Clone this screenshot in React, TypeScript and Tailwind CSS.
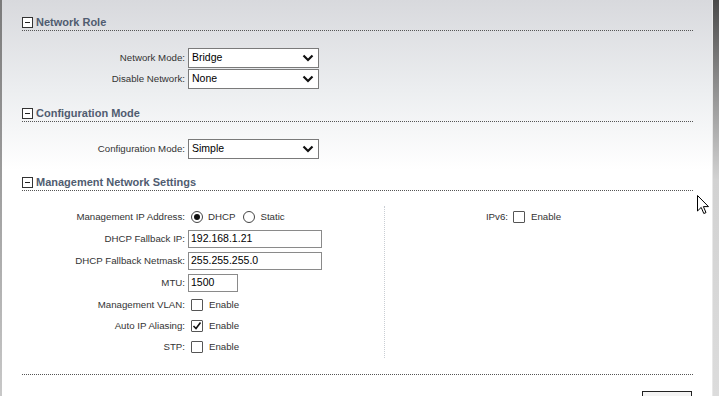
import React from "react";

const font = { fontFamily: '"Liberation Sans", Arial, sans-serif' };

function SectionHeader({ title, mt }: { title: string; mt: string }) {
  return (
    <div className={`${mt} flex items-center h-[15px] border-b border-dotted border-[#555] pb-[1px]`}>
      <div className="relative w-[11px] h-[11px] border border-[#333] bg-white flex items-center justify-center">
        <div className="w-[5px] h-[1px] bg-[#222]" />
      </div>
      <span className="ml-[3px] text-[11px] font-bold text-[#505c70] leading-none">{title}</span>
    </div>
  );
}

function Chevron() {
  return (
    <svg width="12" height="8" viewBox="0 0 12 8" className="block">
      <polyline points="1.5,1.5 6,6 10.5,1.5" fill="none" stroke="#111" strokeWidth="2.2" />
    </svg>
  );
}

function Select({ value }: { value: string }) {
  return (
    <div className="w-[131px] h-[20px] border border-[#7a7a7a] bg-white flex items-center justify-between pl-[3px] pr-[4px]">
      <span className="text-[10.5px] text-black">{value}</span>
      <Chevron />
    </div>
  );
}

function Input({ value, w }: { value: string; w: string }) {
  return (
    <div className={`${w} h-[18px] border border-[#8a8a8a] bg-white flex items-center pl-[2px]`}>
      <span className="text-[10.5px] text-black">{value}</span>
    </div>
  );
}

function Checkbox({ checked }: { checked?: boolean }) {
  return (
    <div className="w-[12px] h-[12px] border border-[#555] rounded-[1px] bg-white flex items-center justify-center">
      {checked && (
        <svg width="10" height="10" viewBox="0 0 10 10">
          <polyline points="1.5,5 4,7.5 8.5,1.5" fill="none" stroke="#111" strokeWidth="1.6" />
        </svg>
      )}
    </div>
  );
}

function Radio({ checked }: { checked?: boolean }) {
  return (
    <div className="w-[12px] h-[12px] rounded-full border border-[#444] bg-white flex items-center justify-center">
      {checked && <div className="w-[6px] h-[6px] rounded-full bg-[#111]" />}
    </div>
  );
}

function Row({ label, h, children }: { label: string; h: string; children: React.ReactNode }) {
  return (
    <div className={`flex items-center ${h}`}>
      <div className="w-[166px] pr-[3px] text-right text-[9.7px] text-[#333] whitespace-nowrap">{label}</div>
      <div className="flex items-center">{children}</div>
    </div>
  );
}

function Enable({ checked }: { checked?: boolean }) {
  return (
    <div className="flex items-center ml-[3px]">
      <Checkbox checked={checked} />
      <span className="ml-[6px] text-[9.7px] text-[#333]">Enable</span>
    </div>
  );
}

export default function App() {
  return (
    <div style={font} className="relative w-[719px] h-[396px] overflow-hidden flex bg-white">
      <div className="w-[2px] h-full bg-[linear-gradient(to_bottom,#7a7a7a,#c8c8c8)]" />
      <div className="flex-1 h-full pl-[20px] pr-[19px] bg-[linear-gradient(to_bottom,#d8d9dd_0px,#eceef0_90px,#ffffff_170px)]">
        <SectionHeader title="Network Role" mt="mt-[16px]" />
        <div className="mt-[17px] flex flex-col gap-[1px]">
          <Row label="Network Mode:" h="h-[20px]">
            <Select value="Bridge" />
          </Row>
          <Row label="Disable Network:" h="h-[20px]">
            <Select value="None" />
          </Row>
        </div>

        <SectionHeader title="Configuration Mode" mt="mt-[18px]" />
        <div className="mt-[17px]">
          <Row label="Configuration Mode:" h="h-[20px]">
            <Select value="Simple" />
          </Row>
        </div>

        <SectionHeader title="Management Network Settings" mt="mt-[17px]" />
        <div className="mt-[15px] flex">
          <div className="w-[363px] border-r border-dotted border-[#c9ced4] flex flex-col">
            <Row label="Management IP Address:" h="h-[22px]">
              <div className="flex items-center ml-[3px]">
                <Radio checked />
                <span className="ml-[5px] text-[9.7px] text-[#333]">DHCP</span>
                <div className="ml-[8px]">
                  <Radio />
                </div>
                <span className="ml-[5px] text-[9.7px] text-[#333]">Static</span>
              </div>
            </Row>
            <Row label="DHCP Fallback IP:" h="h-[22px]">
              <Input value="192.168.1.21" w="w-[134px]" />
            </Row>
            <Row label="DHCP Fallback Netmask:" h="h-[22px]">
              <Input value="255.255.255.0" w="w-[134px]" />
            </Row>
            <Row label="MTU:" h="h-[22px]">
              <Input value="1500" w="w-[50px]" />
            </Row>
            <Row label="Management VLAN:" h="h-[22px]">
              <Enable />
            </Row>
            <Row label="Auto IP Aliasing:" h="h-[21px]">
              <Enable checked />
            </Row>
            <Row label="STP:" h="h-[21px]">
              <Enable />
            </Row>
          </div>
          <div className="flex-1">
            <div className="flex items-center h-[22px]">
              <div className="w-[126px] pr-[3px] text-right text-[9.7px] text-[#333]">IPv6:</div>
              <div className="-ml-[1px]">
                <Enable />
              </div>
            </div>
          </div>
        </div>

        <div className="mt-[16px] border-b border-dotted border-[#555]" />
        <div className="mt-[16px] flex justify-end pr-[1px]">
          <div className="w-[50px] h-[20px] border border-[#222] bg-[#f4f4f4]" />
        </div>
      </div>
      <div className="w-[7px] h-full bg-[linear-gradient(to_bottom,#4a4a4a_0px,#8a8a8a_80px,#d2d2d2_180px,#dcdcdc_396px)] border-l border-[#e8e8e8]" />

      <svg
        className="absolute left-[697px] top-[195px]"
        width="13"
        height="20"
        viewBox="0 0 13 20"
      >
        <path d="M0.5,0.5 L0.5,16 L4.2,12.4 L6.8,18.5 L9,17.6 L6.4,11.6 L11.5,11.6 Z" fill="#fff" stroke="#000" strokeWidth="1" />
      </svg>
    </div>
  );
}
